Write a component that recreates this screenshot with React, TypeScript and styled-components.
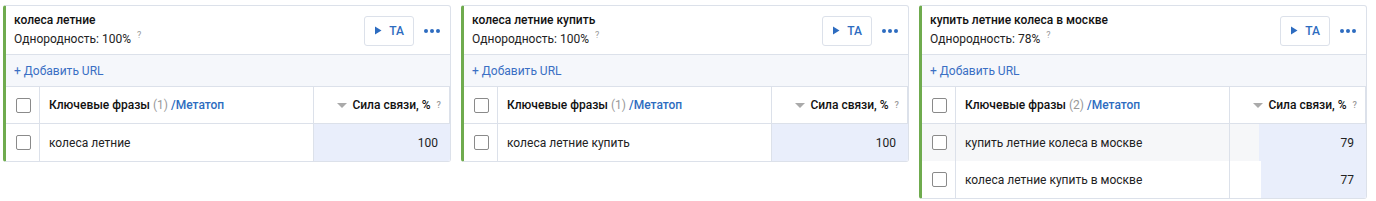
import React from "react";
import styled, { createGlobalStyle } from "styled-components";

const GlobalStyle = createGlobalStyle`
  body {
    margin: 0;
    background: #ffffff;
    font-family: Roboto, "Liberation Sans", Arial, sans-serif;
    font-size: 12px;
    color: #222;
  }
`;

type Phrase = { text: string; strength: number };
type Cluster = { title: string; uniformity: number; phrases: Phrase[] };

const clusters: Cluster[] = [
  {
    title: "колеса летние",
    uniformity: 100,
    phrases: [{ text: "колеса летние", strength: 100 }],
  },
  {
    title: "колеса летние купить",
    uniformity: 100,
    phrases: [{ text: "колеса летние купить", strength: 100 }],
  },
  {
    title: "купить летние колеса в москве",
    uniformity: 78,
    phrases: [
      { text: "купить летние колеса в москве", strength: 79 },
      { text: "колеса летние купить в москве", strength: 77 },
    ],
  },
];

export default function App() {
  return (
    <>
      <GlobalStyle />
      <Board>
        {clusters.map((c, i) => (
          <ClusterCard key={i} cluster={c} hoverRow={c.phrases.length > 1 ? 0 : -1} />
        ))}
      </Board>
    </>
  );
}

const ClusterCard: React.FC<{ cluster: Cluster; hoverRow: number }> = ({ cluster, hoverRow }) => (
  <Card>
    <Head>
      <HeadText>
        <Title>{cluster.title}</Title>
        <Sub>
          Однородность: {cluster.uniformity}%<Hint>?</Hint>
        </Sub>
      </HeadText>
      <TaButton>
        <svg width="8" height="9" viewBox="0 0 8 9">
          <path d="M1 0.5 L7.5 4.5 L1 8.5 Z" fill="#2d6cc0" />
        </svg>
        TA
      </TaButton>
      <Dots>
        <i />
        <i />
        <i />
      </Dots>
    </Head>
    <AddUrl>+ Добавить URL</AddUrl>
    <Table>
      <HeadCell>
        <Check />
      </HeadCell>
      <HeadCell>
        Ключевые фразы&nbsp;<Muted>({cluster.phrases.length})</Muted>&nbsp;<Link>/Метатоп</Link>
      </HeadCell>
      <HeadCell $right>
        <SortArrow />
        Сила связи, %<Hint>?</Hint>
      </HeadCell>
      {cluster.phrases.map((p, i) => (
        <React.Fragment key={i}>
          <Cell $hover={i === hoverRow}>
            <Check />
          </Cell>
          <Cell $hover={i === hoverRow}>{p.text}</Cell>
          <StrengthCell $hover={i === hoverRow}>
            <Bar style={{ width: `${p.strength}%` }} />
            <Value>{p.strength}</Value>
          </StrengthCell>
        </React.Fragment>
      ))}
    </Table>
  </Card>
);

const Board = styled.div`
  display: flex;
  align-items: flex-start;
  gap: 10px;
  padding: 5px 0 0 3px;
`;

const Card = styled.div`
  width: 448px;
  box-sizing: border-box;
  border: 1px solid #dce1ea;
  border-left: 3px solid #6fab4e;
  border-radius: 3px;
  background: #fff;
  overflow: hidden;
`;

const Head = styled.div`
  display: flex;
  align-items: center;
  height: 48px;
  padding: 0 10px 0 8px;
  border-bottom: 1px solid #dce1ea;
`;

const HeadText = styled.div`
  flex: 1;
  display: flex;
  flex-direction: column;
  gap: 5px;
  margin-top: -2px;
`;

const Title = styled.div`
  font-weight: 500;
  color: #111;
  line-height: 14px;
`;

const Sub = styled.div`
  color: #222;
  line-height: 14px;
`;

const Hint = styled.sup`
  color: #999;
  font-size: 9px;
  margin-left: 6px;
  vertical-align: 5px;
  line-height: 0;
`;

const TaButton = styled.button`
  display: flex;
  align-items: center;
  justify-content: center;
  gap: 7px;
  width: 50px;
  height: 30px;
  margin-top: 1px;
  padding: 0;
  border: 1px solid #dce1ea;
  border-radius: 3px;
  background: #fff;
  color: #2d6cc0;
  font-family: inherit;
  font-size: 12px;
  font-weight: 500;
`;

const Dots = styled.div`
  display: flex;
  gap: 2px;
  margin-left: 10px;
  margin-top: 1px;
  i {
    width: 4px;
    height: 4px;
    border-radius: 50%;
    background: #2d6cc0;
  }
`;

const AddUrl = styled.div`
  height: 31px;
  display: flex;
  align-items: center;
  padding-left: 8px;
  background: #f5f7fb;
  color: #3a6fc4;
  border-bottom: 1px solid #dce1ea;
`;

const Table = styled.div`
  display: grid;
  grid-template-columns: 34px 274px 1fr;
`;

const HeadCell = styled.div<{ $right?: boolean }>`
  height: 37px;
  box-sizing: border-box;
  display: flex;
  align-items: center;
  justify-content: ${(p) => (p.$right ? "flex-end" : "flex-start")};
  padding: ${(p) => (p.$right ? "0 8px 0 0" : "0 0 0 9px")};
  border-bottom: 1px solid #dce1ea;
  font-weight: 500;
  color: #111;
  &:not(:last-child) {
    border-right: 1px solid #dce1ea;
  }
  &:first-child {
    padding-left: 10px;
  }
`;

const Muted = styled.span`
  color: #999;
  font-weight: 400;
`;

const Link = styled.span`
  color: #2d6cc0;
`;

const SortArrow = styled.span`
  width: 0;
  height: 0;
  border-left: 5px solid transparent;
  border-right: 5px solid transparent;
  border-top: 5px solid #aaa;
  margin-right: 5px;
  margin-top: 1px;
`;

const Cell = styled.div<{ $hover?: boolean }>`
  height: 37px;
  box-sizing: border-box;
  display: flex;
  align-items: center;
  padding-left: 9px;
  background: ${(p) => (p.$hover ? "#f6f7f9" : "#fff")};
  border-right: 1px solid #dce1ea;
  color: #222;
  &:nth-child(3n + 1) {
    padding-left: 10px;
  }
`;

const StrengthCell = styled.div<{ $hover?: boolean }>`
  position: relative;
  height: 37px;
  display: flex;
  align-items: center;
  justify-content: flex-end;
  padding-right: 12px;
  background: ${(p) => (p.$hover ? "#f6f7f9" : "#fff")};
`;

const Bar = styled.div`
  position: absolute;
  top: 0;
  right: 0;
  bottom: 0;
  background: #e9eefb;
`;

const Value = styled.span`
  position: relative;
  color: #222;
`;

const Check = styled.span`
  width: 13px;
  height: 13px;
  border: 1px solid #8a8a8a;
  border-radius: 2px;
  background: #fff;
`;
